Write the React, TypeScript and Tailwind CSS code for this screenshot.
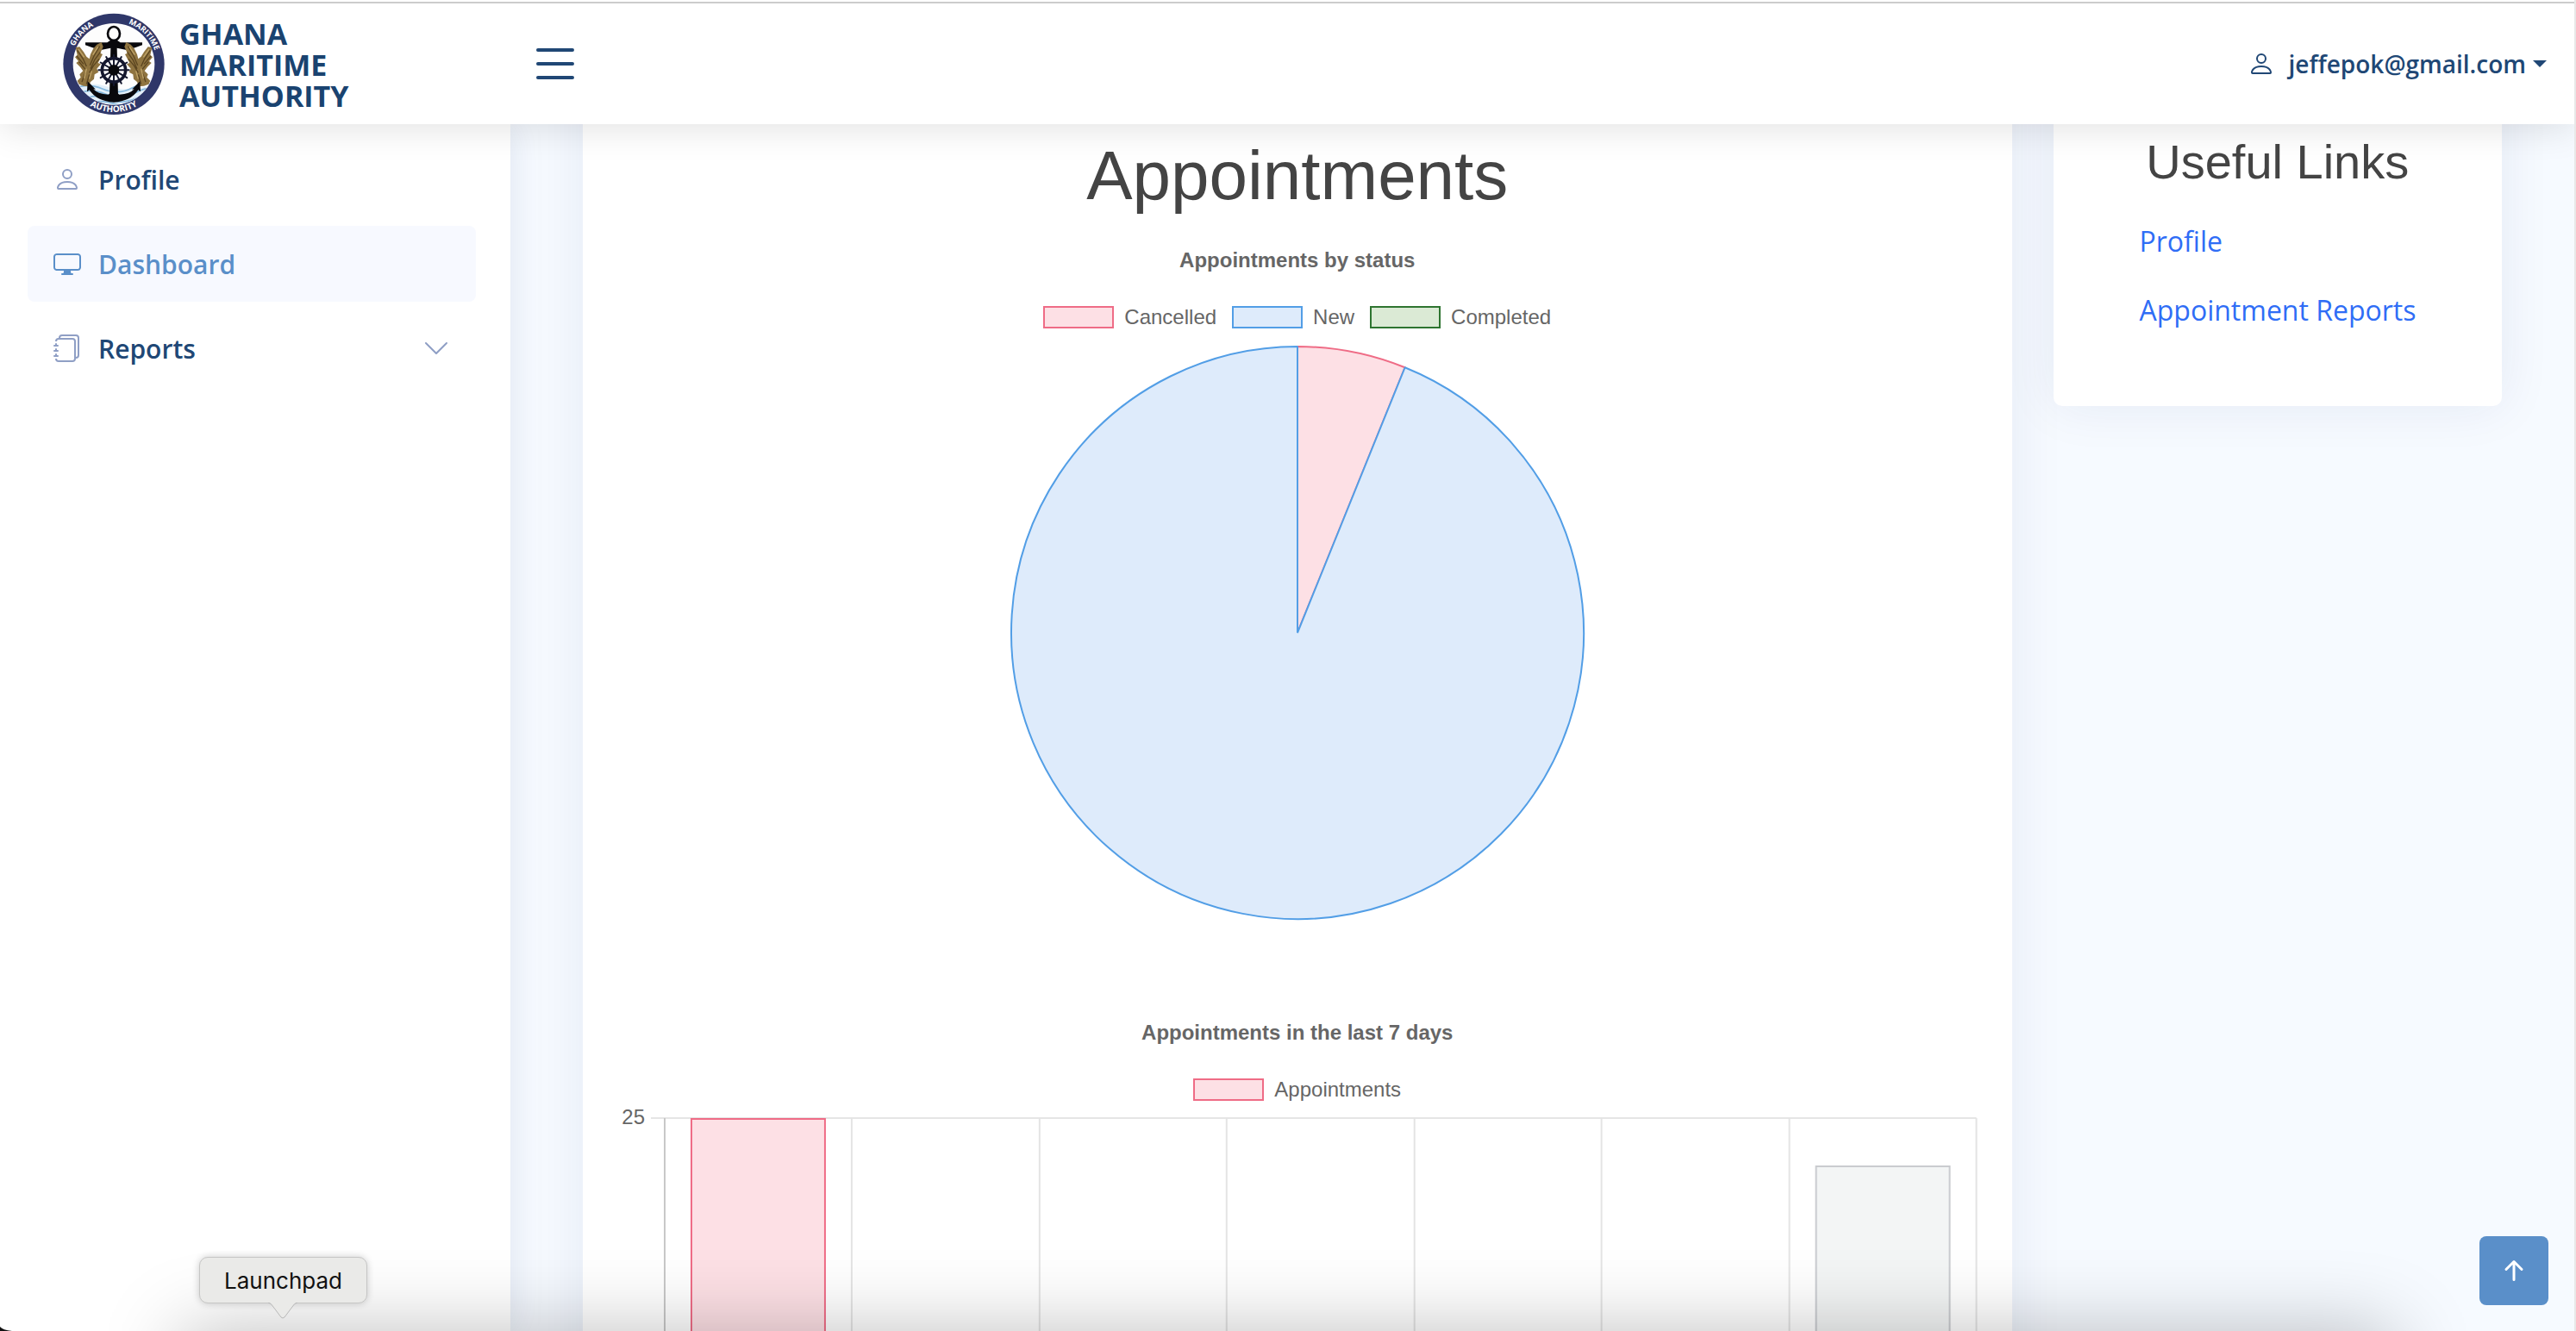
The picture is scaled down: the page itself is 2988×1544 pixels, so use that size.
import React from "react";
import {
  BsArrowUpShort,
  BsChevronDown,
  BsDisplay,
  BsJournals,
  BsList,
  BsPerson,
} from "react-icons/bs";

const spokes = [0, 30, 60, 90, 120, 150, 180, 210, 240, 270, 300, 330];

function Eagle() {
  return (
    <g>
      <path
        d="M112 152 L118 178 L110 186 L122 200 L114 206 L128 220 L138 234 L126 246 L130 256 L118 268 L124 280 L140 286 L158 288 L164 272 L176 262 L178 246 L192 238 L186 226 L200 210 L190 206 L206 176 L198 172 L208 150 L202 134 L186 142 L174 156 L164 176 L160 192 L150 184 L140 168 L126 150 Z"
        fill="#8f7440"
      />
      <path
        d="M118 162 L138 192 L150 218 M116 182 L140 210 M124 202 L146 228 M196 148 L176 182 L162 214 M198 168 L178 196 L164 226 M194 192 L174 216 L160 240 M146 240 L134 272 M160 246 L150 280"
        stroke="#5b4520"
        strokeWidth="4"
        fill="none"
      />
      <path
        d="M122 158 L142 186 M190 150 L172 178 M150 226 L142 260 M168 234 L160 262"
        stroke="#c0a468"
        strokeWidth="4"
        fill="none"
      />
    </g>
  );
}

function Emblem() {
  return (
    <svg
      viewBox="65 32 360 360"
      className="size-[120px] shrink-0"
      role="img"
      aria-label="Ghana Maritime Authority emblem"
    >
      <defs>
        <path id="arc-top" d="M95 210 A150 150 0 0 1 395 210" />
        <path id="arc-bottom" d="M78 210 A167 167 0 0 0 412 210" />
        <clipPath id="disc">
          <circle cx="245" cy="210" r="141" />
        </clipPath>
      </defs>
      <circle cx="245" cy="210" r="176" fill="#2f3769" />
      <circle cx="245" cy="210" r="142" fill="#fdfdfd" />
      <g clipPath="url(#disc)">
        <path d="M100 292 Q160 268 220 288 T390 282 V360 H100 Z" fill="#e3f0fa" />
        <path
          d="M100 300 Q150 272 205 296 T310 292 T400 292 M110 318 Q160 290 215 314 T320 310 T400 306 M130 336 Q180 310 225 332 T330 326 T390 322 M150 352 Q200 330 245 348 T350 340"
          stroke="#86b8dd"
          strokeWidth="5"
          fill="none"
        />
      </g>
      <ellipse cx="245" cy="104" rx="21" ry="24" fill="none" stroke="#08080c" strokeWidth="8" />
      <path
        d="M146 135 H222 L238 124 H252 L268 135 H344 V144 Q320 154 290 161 L256 154 L260 320 H230 L234 154 L200 161 Q170 154 146 144 Z"
        fill="#08080c"
      />
      <Eagle />
      <g transform="translate(490 0) scale(-1 1)">
        <Eagle />
      </g>
      <path
        d="M152 306 L154 270 L182 298 L174 297 Q188 314 226 316 L245 300 L264 316 Q302 314 316 297 L308 298 L336 270 L338 306 L330 300 Q304 340 245 343 Q186 340 160 300 Z"
        fill="#08080c"
      />
      <circle cx="245" cy="231" r="41" fill="#ffffff" stroke="#14172e" strokeWidth="11" />
      <g stroke="#14172e" strokeWidth="6" strokeLinecap="round">
        {spokes.map((a) => (
          <line key={a} x1="245" y1="231" x2="245" y2="178" transform={`rotate(${a} 245 231)`} />
        ))}
      </g>
      <circle cx="245" cy="231" r="19" fill="#08080c" />
      <g
        fill="#ffffff"
        fontFamily='"Open Sans", sans-serif'
        fontWeight="700"
        fontSize="27"
        textAnchor="middle"
      >
        <text>
          <textPath href="#arc-top" startOffset="24%">
            GHANA
          </textPath>
        </text>
        <text>
          <textPath href="#arc-top" startOffset="75.5%">
            MARITIME
          </textPath>
        </text>
        <text fontSize="30">
          <textPath href="#arc-bottom" startOffset="50%">
            AUTHORITY
          </textPath>
        </text>
      </g>
    </svg>
  );
}

function Header() {
  return (
    <header className="relative z-20 shrink-0 bg-white shadow-[0_4px_40px_rgba(0,0,0,0.12)]">
      <div className="mt-0.5 h-0.5 bg-[#cccccc]" />
      <div className="flex h-[140px] items-center pr-8 pl-[72px]">
        <a href="#home" className="flex w-[540px] items-center gap-4 pt-0.5">
          <Emblem />
          <span className="text-[34px] leading-9 font-bold text-[#1a4370]">
            GHANA
            <br />
            MARITIME
            <br />
            AUTHORITY
          </span>
        </a>
        <button type="button" aria-label="Toggle sidebar" className="text-[#204775]">
          <BsList className="size-16" />
        </button>
        <button
          type="button"
          className="ml-auto flex items-center text-[28px] font-semibold text-[#204775]"
        >
          <BsPerson className="mr-4 size-8" />
          jeffepok@gmail.com
          <span className="ml-2 border-x-8 border-t-8 border-x-transparent border-t-[#204775]" />
        </button>
      </div>
    </header>
  );
}

function Sidebar() {
  const row = "flex h-[88px] items-center gap-5 rounded-lg px-[30px] text-[30px] font-semibold";
  return (
    <aside className="w-[592px] shrink-0 bg-white pt-5 pr-10 pl-8 shadow-[0_0_40px_rgba(1,41,112,0.1)]">
      <nav className="flex flex-col gap-2.5">
        <a href="#profile" className={`${row} text-[#204775]`}>
          <BsPerson className="size-8 text-[#8f9fc5]" />
          Profile
        </a>
        <a href="#dashboard" className={`${row} bg-[#f7f9ff] text-[#5a8fc9]`}>
          <BsDisplay className="size-8" />
          Dashboard
        </a>
        <a href="#reports" className={`${row} text-[#204775]`}>
          <BsJournals className="size-8 text-[#8f9fc5]" />
          Reports
          <BsChevronDown className="ml-auto size-8 text-[#8f9fc5]" />
        </a>
      </nav>
    </aside>
  );
}

function LegendItem({ label, swatch }: { label: string; swatch: string }) {
  return (
    <li className="flex items-center gap-3">
      <span className={`h-[26px] w-[82px] border-2 ${swatch}`} />
      {label}
    </li>
  );
}

function PieChart({ cancelled, total }: { cancelled: number; total: number }) {
  const r = 332;
  const angle = (cancelled / total) * 2 * Math.PI;
  const x = 334 + r * Math.sin(angle);
  const y = 334 - r * Math.cos(angle);
  return (
    <svg viewBox="0 0 668 668" className="size-[668px]" role="img" aria-label="Appointments by status">
      <path
        d={`M334 334 L334 2 A${r} ${r} 0 0 1 ${x} ${y} Z`}
        fill="#fde0e5"
        stroke="#ef6c86"
        strokeWidth="2"
      />
      <path
        d={`M334 334 L${x} ${y} A${r} ${r} 0 1 1 334 2 Z`}
        fill="#deebfb"
        stroke="#529ee6"
        strokeWidth="2"
        strokeLinejoin="bevel"
      />
    </svg>
  );
}

const gridLines = [272, 490, 707, 925, 1142, 1360, 1577];

function BarChart() {
  return (
    <svg
      viewBox="0 0 1578 560"
      className="w-full overflow-visible"
      role="img"
      aria-label="Appointments in the last 7 days"
    >
      <text
        x="32"
        y="20"
        textAnchor="end"
        fontFamily='"Liberation Sans", sans-serif'
        fontSize="24"
        fill="#666666"
      >
        25
      </text>
      <path d="M39 13 H1577" stroke="#e5e5e5" strokeWidth="2" />
      <path d="M55 13 V560" stroke="#c8c8c8" strokeWidth="2" />
      {gridLines.map((x) => (
        <path key={x} d={`M${x} 13 V560`} stroke="#e4e4e4" strokeWidth="2" />
      ))}
      <rect x="86" y="14" width="155" height="546" fill="#fde0e5" stroke="#ef6c86" strokeWidth="2" />
      <rect x="1391" y="69" width="155" height="491" fill="#f3f5f5" stroke="#c9cbcf" strokeWidth="2" />
    </svg>
  );
}

export default function App() {
  return (
    <div className="relative flex h-screen flex-col overflow-hidden border-r-2 border-[#e8e8e8] bg-[#f6faff] font-['Open_Sans',sans-serif]">
      <Header />
      <div className="flex min-h-0 flex-1">
        <Sidebar />
        <main className="min-w-0 flex-1 px-[84px]">
          <div className="-mx-6 flex items-start font-['Liberation_Sans',sans-serif]">
            <div className="w-3/4 px-6">
              <section className="-mt-20 flex flex-col items-center bg-white px-10 pt-[92px] pb-10 text-[24px] leading-7 text-[#666666] shadow-[0_0_60px_rgba(1,41,112,0.08)]">
                <h1 className="text-[80px] leading-24 text-[#444444]">Appointments</h1>
                <h2 className="mt-9 font-bold">Appointments by status</h2>
                <ul className="mt-[38px] mb-[18px] flex gap-[18px]">
                  <LegendItem label="Cancelled" swatch="border-[#ef6c86] bg-[#fde0e5]" />
                  <LegendItem label="New" swatch="border-[#529ee6] bg-[#deebfb]" />
                  <LegendItem label="Completed" swatch="border-[#2e7430] bg-[#dbead5]" />
                </ul>
                <PieChart cancelled={3} total={49} />
                <h2 className="mt-[116px] font-bold">Appointments in the last 7 days</h2>
                <ul className="mt-[38px] mb-1.5 flex">
                  <LegendItem label="Appointments" swatch="border-[#ef6c86] bg-[#fde0e5]" />
                </ul>
                <BarChart />
              </section>
            </div>
            <div className="w-1/4 px-6">
              <section className="-mt-20 rounded-[10px] bg-white pt-[90px] pb-[87px] shadow-[0_0_60px_rgba(1,41,112,0.08)]">
                <h2 className="text-center text-[56px] leading-[68px] text-[#444444]">
                  Useful Links
                </h2>
                <ul className="mt-[34px] flex flex-col gap-8 pl-[100px] font-['Open_Sans',sans-serif] text-[32px] leading-12 text-[#2f6df6]">
                  <li>
                    <a href="#profile">Profile</a>
                  </li>
                  <li>
                    <a href="#appointment-reports">Appointment Reports</a>
                  </li>
                </ul>
              </section>
            </div>
          </div>
        </main>
      </div>

      <div className="pointer-events-none absolute inset-x-0 bottom-0 z-30 h-[140px] overflow-hidden">
        <div className="absolute top-full right-[210px] left-[210px] h-40 shadow-[0_0_90px_rgba(0,0,0,0.25)]" />
        <svg viewBox="0 0 14 5" className="absolute bottom-0 left-0 h-[5px] w-3.5" aria-hidden="true">
          <path d="M0 0 Q3 4 14 5 H0 Z" fill="#111111" />
        </svg>
      </div>

      <div
        role="tooltip"
        className="absolute bottom-8 left-[231px] z-40 rounded-[10px] border border-[#c6c6c5] bg-[#eaeae8] px-7 pt-[9px] pb-[7px] font-['Inter',sans-serif] text-[26px] leading-9 text-[#111111] shadow-[0_0_8px_rgba(0,0,0,0.2)]"
      >
        Launchpad
        <svg
          viewBox="0 0 34 20"
          className="absolute top-full left-1/2 h-5 w-[34px] -translate-x-1/2"
          aria-hidden="true"
        >
          <path d="M0 -1 Q4 1 6 5 L15 17 Q17 19 19 17 L28 5 Q30 1 34 -1 Z" fill="#eaeae8" />
          <path
            d="M0 0 Q4 1 6 5 L15 17 Q17 19 19 17 L28 5 Q30 1 34 0"
            fill="none"
            stroke="#b8b8b8"
          />
        </svg>
      </div>

      <button
        type="button"
        aria-label="Back to top"
        className="absolute right-[30px] bottom-[30px] z-40 flex size-20 items-center justify-center rounded-lg bg-[#5a8fc9] text-white"
      >
        <BsArrowUpShort className="size-12" />
      </button>
    </div>
  );
}
